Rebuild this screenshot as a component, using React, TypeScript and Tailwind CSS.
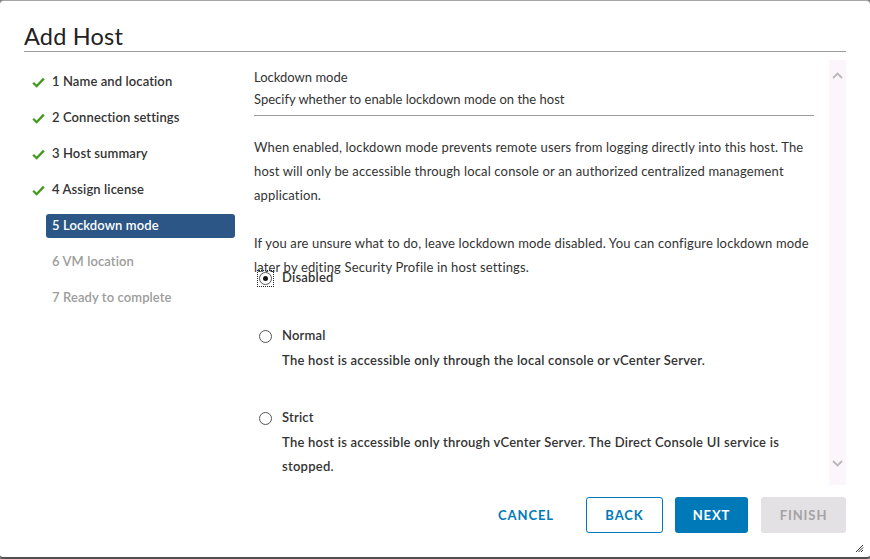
import { useState } from 'react'

const steps = [
  { label: '1 Name and location', state: 'done' },
  { label: '2 Connection settings', state: 'done' },
  { label: '3 Host summary', state: 'done' },
  { label: '4 Assign license', state: 'done' },
  { label: '5 Lockdown mode', state: 'active' },
  { label: '6 VM location', state: 'todo' },
  { label: '7 Ready to complete', state: 'todo' },
]

const options = [
  { id: 'disabled', label: 'Disabled', desc: [] as string[] },
  {
    id: 'normal',
    label: 'Normal',
    desc: ['The host is accessible only through the local console or vCenter Server.'],
  },
  {
    id: 'strict',
    label: 'Strict',
    desc: [
      'The host is accessible only through vCenter Server. The Direct Console UI service is',
      'stopped.',
    ],
  },
]

function CheckIcon() {
  return (
    <svg width="13" height="11" viewBox="0 0 13 11" fill="none">
      <path d="M1.2 5.8 L4.6 9.2 L11.8 1.6" stroke="#3f9a1c" strokeWidth="2.3" />
    </svg>
  )
}

function Chevron({ up }: { up?: boolean }) {
  return (
    <svg width="11" height="7" viewBox="0 0 11 7" fill="none">
      <path
        d={up ? 'M1 6 L5.5 1.5 L10 6' : 'M1 1 L5.5 5.5 L10 1'}
        stroke="#b8b8b8"
        strokeWidth="1.8"
      />
    </svg>
  )
}

function Radio({ checked, focused }: { checked: boolean; focused?: boolean }) {
  return (
    <span
      className={
        'flex h-[15px] w-[15px] items-center justify-center ' +
        (focused ? 'outline outline-1 outline-dotted outline-[#222]' : '')
      }
    >
      <span className="flex h-[13px] w-[13px] items-center justify-center rounded-full border border-[#555] bg-white">
        {checked && <span className="h-[5px] w-[5px] rounded-full bg-[#111]" />}
      </span>
    </span>
  )
}

export default function App() {
  const [mode, setMode] = useState('disabled')

  return (
    <div
      className="h-[559px] w-[870px] bg-[#7c7c7c] text-[#333]"
      style={{ fontFamily: 'Lato, "Noto Sans", sans-serif' }}
    >
      <div className="relative flex h-full flex-col rounded-[4px] border-t border-b-2 border-t-[#a5a5a5] border-b-[#505050] bg-white">
        <div className="mx-[24px] border-b border-[#9c9c9c] pt-[20px]">
          <h3 className="text-[23.5px] leading-[30px] font-normal tracking-[0.2px] text-[#222]">Add Host</h3>
        </div>

        <div className="flex h-[433px] pt-[8px]">
          <nav className="flex w-[254px] flex-col gap-3 pt-[10px] pl-[24px]">
            {steps.map((s) => (
              <div key={s.label} className="flex h-6 items-center">
                <span className="flex w-[22px] justify-start pl-[8px]">
                  {s.state === 'done' && <CheckIcon />}
                </span>
                <span
                  className={
                    'flex h-6 w-[189px] items-center rounded-[3px] px-[6px] text-[13px] font-semibold tracking-[0.1px] ' +
                    (s.state === 'active'
                      ? 'bg-[#2b5685] text-white'
                      : s.state === 'done'
                        ? 'text-[#333]'
                        : 'text-[#9c9c9c]')
                  }
                >
                  {s.label}
                </span>
              </div>
            ))}
          </nav>

          <div className="flex flex-1 pr-[24px]">
            <div className="flex-1 pt-[9px] pr-[15px]">
              <div className="border-b border-[#9c9c9c] pb-[4px]">
                <div className="text-[13px] leading-[16px] font-normal">Lockdown mode</div>
                <div className="mt-[2px] text-[13px] leading-[24px]">
                  Specify whether to enable lockdown mode on the host
                </div>
              </div>

              <p className="mt-[19px] text-[13px] leading-[24px] tracking-[0.15px]">
                When enabled, lockdown mode prevents remote users from logging directly into this host. The
                host will only be accessible through local console or an authorized centralized management
                application.
              </p>
              <p className="mt-6 text-[13px] leading-[24px] tracking-[0.15px]">
                If you are unsure what to do, leave lockdown mode disabled. You can configure lockdown mode
                later by editing Security Profile in host settings.
              </p>

              <div className="-mt-[13px] flex flex-col gap-[34px]">
                {options.map((o) => (
                  <div key={o.id} onClick={() => setMode(o.id)} className="cursor-pointer">
                    <div className="flex h-6 items-center">
                      <span className="ml-[4px] mr-[9px]">
                        <Radio checked={mode === o.id} focused={o.id === 'disabled'} />
                      </span>
                      <span className="text-[13px] font-semibold tracking-[0.2px]">{o.label}</span>
                    </div>
                    {o.desc.map((d) => (
                      <div
                        key={d}
                        className="pl-[28px] text-[13px] leading-[24px] font-semibold tracking-[0.25px]"
                      >
                        {d}
                      </div>
                    ))}
                  </div>
                ))}
              </div>
            </div>

            <div className="flex w-[17px] flex-col items-center justify-between bg-[#fcf6fc] pt-[12px] pb-[18px]">
              <Chevron up />
              <Chevron />
            </div>
          </div>
        </div>

        <div className="flex flex-1 items-start justify-end gap-3 pt-[12px] pr-[24px]">
          <button className="mr-[8px] h-9 w-[80px] pt-px text-[13px] font-bold tracking-[0.07em] text-[#0079b8]">
            CANCEL
          </button>
          <button className="h-9 w-[77px] rounded-[3px] border border-[#0079b8] bg-white pt-px text-[13px] font-bold tracking-[0.07em] text-[#0079b8]">
            BACK
          </button>
          <button className="h-9 w-[73px] rounded-[3px] bg-[#0079b8] pt-px text-[13px] font-bold tracking-[0.07em] text-white">
            NEXT
          </button>
          <button className="ml-px h-9 w-[85px] rounded-[3px] bg-[#e3e1e3] pt-px text-[13px] font-bold tracking-[0.07em] text-[#a5a2a5]">
            FINISH
          </button>
        </div>

        <svg
          className="absolute right-[6px] bottom-[4px]"
          width="9"
          height="9"
          viewBox="0 0 9 9"
          fill="none"
          stroke="#333"
          strokeWidth="1"
        >
          <path d="M8 1 L1 8 M8 3.5 L3.5 8 M8 6 L6 8" />
        </svg>
      </div>
    </div>
  )
}
